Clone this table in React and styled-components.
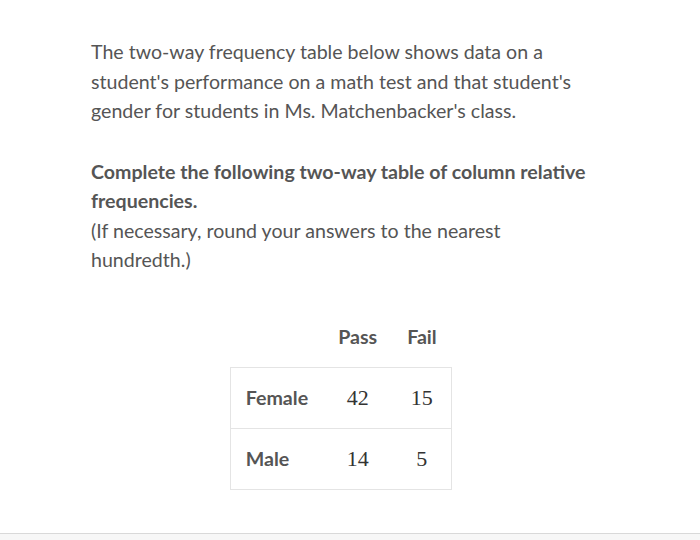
import React from "react";
import styled, { createGlobalStyle } from "styled-components";

const Global = createGlobalStyle`
  html, body { margin: 0; padding: 0; background: #fff; }
  body { font-family: Lato, "Open Sans", sans-serif; color: #555; }
`;

const Page = styled.div`
  width: 700px;
  height: 540px;
  box-sizing: border-box;
  display: flex;
  flex-direction: column;
  justify-content: space-between;
`;

const Content = styled.div`
  width: 500px;
  padding: 37px 0 0 91px;
`;

const Para = styled.p`
  margin: 0 0 ${(p) => p.$gap || 0}px;
  font-size: 19.6px;
  line-height: 29.5px;
  font-weight: 400;
  color: #555;
`;

const Bold = styled.span`
  font-weight: 700;
  display: block;
`;

const TableWrap = styled.div`
  display: flex;
  justify-content: center;
  margin-top: 31px;
`;

const Table = styled.table`
  border-collapse: collapse;
`;

const HeadCell = styled.th`
  height: 61px;
  padding: 0 15px;
  font-size: 19.6px;
  font-weight: 700;
  color: #555;
  text-align: center;
  vertical-align: middle;
  border: none;
`;

const Row = styled.tr`
  height: 61px;
  border: 1px solid #e4e4e4;
`;

const Label = styled.td`
  padding: 0 15px;
  font-size: 19.6px;
  font-weight: 700;
  color: #555;
  text-align: left;
  vertical-align: middle;
`;

const Num = styled.td`
  padding: 0 15px;
  font-family: "Liberation Serif", "Times New Roman", serif;
  font-size: 22px;
  color: #333;
  text-align: center;
  vertical-align: middle;
`;

const Footer = styled.div`
  height: 6px;
  border-top: 1px solid #d9d9d9;
  background: #f7f7f7;
`;

const rows = [
  ["Female", "42", "15"],
  ["Male", "14", "5"],
];

export default function App() {
  return (
    <>
      <Global />
      <Page>
        <Content>
          <Para $gap={31}>
            The two-way frequency table below shows data on a student's
            performance on a math test and that student's gender for students
            in Ms. Matchenbacker's class.
          </Para>
          <Para>
            <Bold>
              Complete the following two-way table of column relative
              frequencies.
            </Bold>
            (If necessary, round your answers to the nearest hundredth.)
          </Para>
          <TableWrap>
            <Table>
              <thead>
                <tr>
                  <HeadCell />
                  <HeadCell>Pass</HeadCell>
                  <HeadCell>Fail</HeadCell>
                </tr>
              </thead>
              <tbody>
                {rows.map((r) => (
                  <Row key={r[0]}>
                    <Label>{r[0]}</Label>
                    <Num>{r[1]}</Num>
                    <Num>{r[2]}</Num>
                  </Row>
                ))}
              </tbody>
            </Table>
          </TableWrap>
        </Content>
        <Footer />
      </Page>
    </>
  );
}
